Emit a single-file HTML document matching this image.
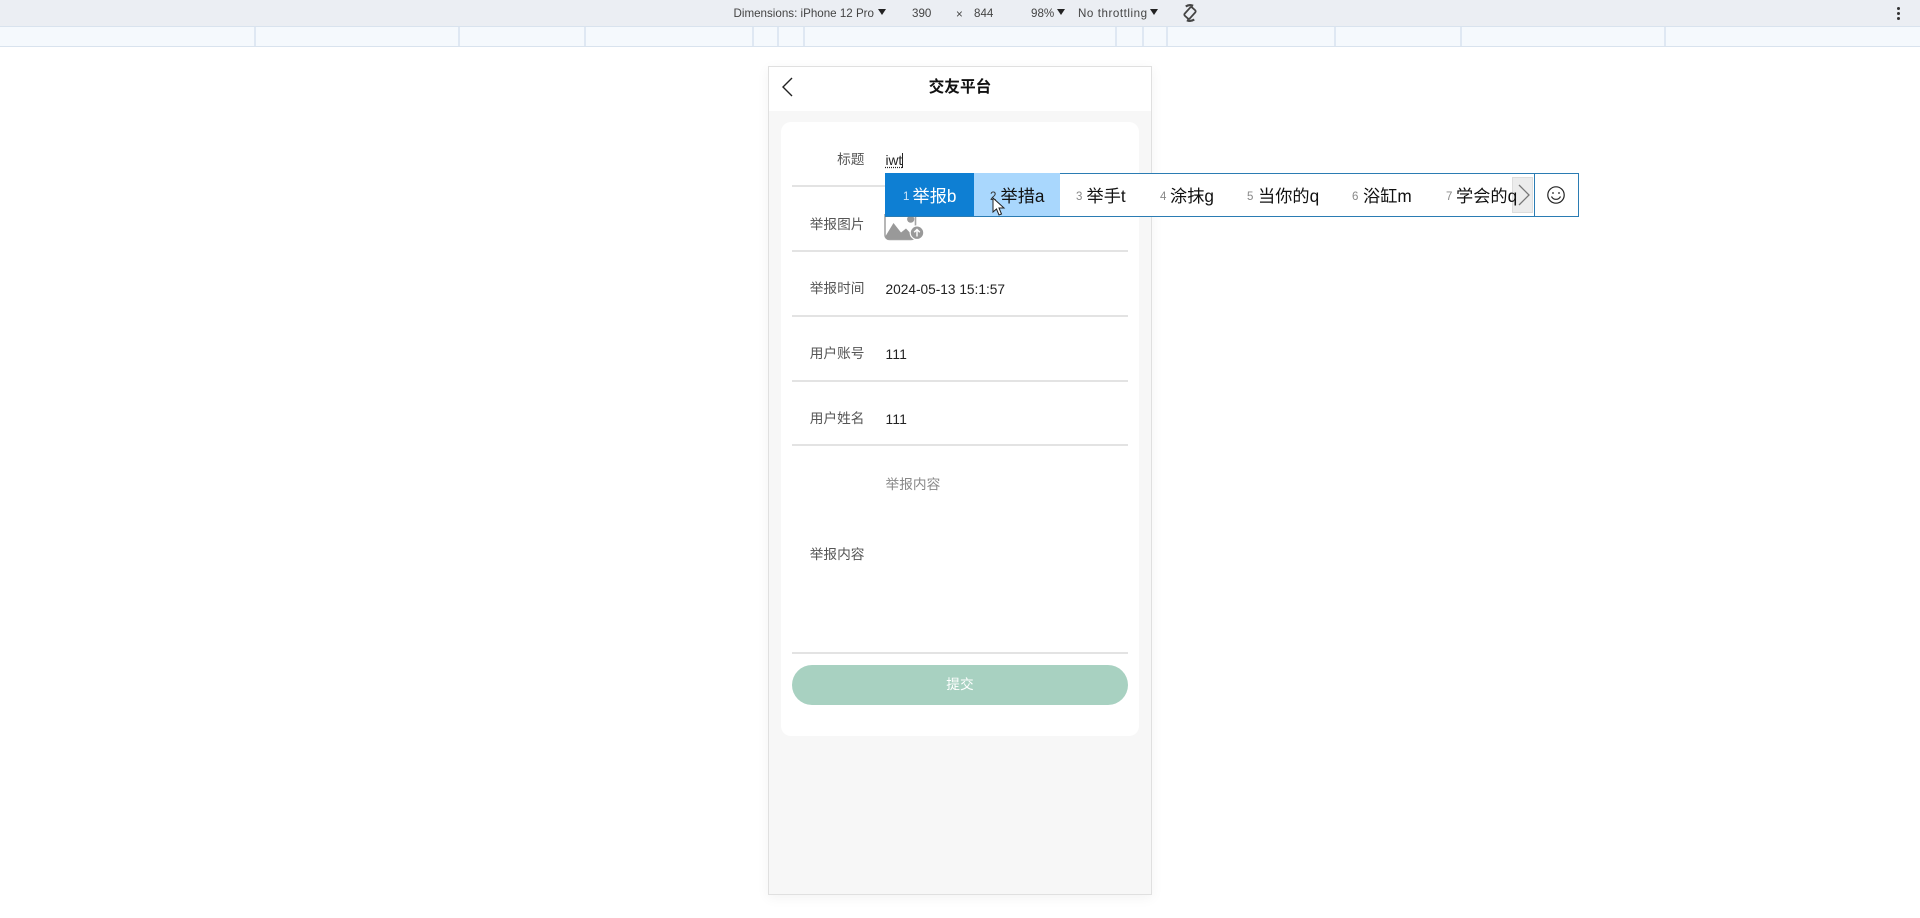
<!DOCTYPE html>
<html lang="zh-CN">
<head>
<meta charset="utf-8">
<title>交友平台</title>
<style>
html,body{margin:0;padding:0;width:1920px;height:918px;overflow:hidden;background:#fff;font-family:"Liberation Sans","Noto Sans CJK SC",sans-serif;}
.a{position:absolute;white-space:nowrap;}
.bar{left:0;top:0;width:1920px;height:26px;background:#ebeef3;}
.rul{left:0;top:26px;width:1920px;background:#f5f9fd;border-top:1px solid #d9e3ee;border-bottom:1px solid #d9e3ee;height:19px;}
.d{top:27px;width:2px;height:19px;background:#dfe8f3;}
.tb{top:6px;height:16px;line-height:16px;font-size:11.6px;color:#444;}
.tri{top:9px;width:0;height:0;border-left:4px solid transparent;border-right:4px solid transparent;border-top:6px solid #222;}
.phone{left:768px;top:66px;width:382px;height:827px;background:#f7f7f7;border:1px solid #e0e0e0;box-shadow:0 3px 12px rgba(0,0,0,.05);}
.head{left:769px;top:67px;width:382px;height:44px;background:#fff;}
.card{left:780.5px;top:122px;width:358.5px;height:614px;background:#fff;border-radius:10px;}
.line{left:792px;width:336px;height:2px;background:#e3e3e3;}
.lb{left:764px;width:100.5px;text-align:right;font-size:13.7px;height:20px;line-height:20px;color:#555;}
.v{left:885.5px;font-size:13.7px;height:20px;line-height:20px;color:#222;}
.ime{left:885px;top:173px;width:692px;height:42px;background:#fff;border:1px solid #2b7cb3;}
.c{top:175px;height:43px;line-height:43px;font-size:17.2px;color:#111;}
.n{top:176px;height:43px;line-height:43px;font-size:11.5px;color:#888;}
</style>
</head>
<body>
<div class="a bar"></div>
<div class="a rul"></div>
<div class="a d" style="left:254px"></div>
<div class="a d" style="left:458px"></div>
<div class="a d" style="left:584px"></div>
<div class="a d" style="left:752px"></div>
<div class="a d" style="left:777px"></div>
<div class="a d" style="left:803px"></div>
<div class="a d" style="left:1115px"></div>
<div class="a d" style="left:1142px"></div>
<div class="a d" style="left:1166px"></div>
<div class="a d" style="left:1334px"></div>
<div class="a d" style="left:1460px"></div>
<div class="a d" style="left:1664px"></div>

<div class="a tb" style="left:733.5px">Dimensions: iPhone 12 Pro</div>
<div class="a tri" style="left:878px"></div>
<div class="a tb" style="left:912px">390</div>
<div class="a tb" style="left:956px;top:7px">×</div>
<div class="a tb" style="left:974px">844</div>
<div class="a tb" style="left:1031px">98%</div>
<div class="a tri" style="left:1057px"></div>
<div class="a tb" style="left:1078px;letter-spacing:.55px">No throttling</div>
<div class="a tri" style="left:1150px"></div>
<svg class="a" style="left:1180px;top:3px" width="20" height="20" viewBox="0 0 20 20" fill="none" stroke="#444" stroke-width="1.8">
<g transform="rotate(42 10 10)"><rect x="6.5" y="4.5" width="7" height="11" rx="1.5"/><path d="M2.5 8A7.8 7.8 0 0 1 7.5 2.5M17.5 12A7.8 7.8 0 0 1 12.5 17.5" stroke-width="2.2"/></g>
</svg>
<div class="a" style="left:1897px;top:7px;width:3px;height:3px;background:#333;border-radius:50%"></div>
<div class="a" style="left:1897px;top:12px;width:3px;height:3px;background:#333;border-radius:50%"></div>
<div class="a" style="left:1897px;top:17px;width:3px;height:3px;background:#333;border-radius:50%"></div>

<div class="a phone"></div>
<div class="a head"></div>
<svg class="a" style="left:780px;top:76px" width="16" height="22" viewBox="0 0 16 22" fill="none" stroke="#222" stroke-width="1.4"><path d="M12 2L3 11L12 20"/></svg>
<div class="a" style="left:860px;width:200px;top:77px;height:22px;line-height:22px;text-align:center;font-size:15.7px;font-weight:700;color:#111">交友平台</div>

<div class="a card"></div>
<div class="a line" style="top:185px"></div>
<div class="a line" style="top:250px"></div>
<div class="a line" style="top:315px"></div>
<div class="a line" style="top:380px"></div>
<div class="a line" style="top:444px"></div>
<div class="a line" style="top:652px"></div>

<div class="a lb" style="top:150px">标题</div>
<div class="a lb" style="top:215px">举报图片</div>
<div class="a lb" style="top:279px">举报时间</div>
<div class="a lb" style="top:344px">用户账号</div>
<div class="a lb" style="top:409px">用户姓名</div>
<div class="a lb" style="top:545px">举报内容</div>

<div class="a v" style="top:150.5px;text-decoration:underline dotted;text-underline-offset:2px">iwt</div>
<div class="a" style="left:902px;top:153px;width:1px;height:15px;background:#222"></div>
<div class="a v" style="top:279.5px">2024-05-13 15:1:57</div>
<div class="a v" style="top:344.5px;letter-spacing:.25px">111</div>
<div class="a v" style="top:409.5px;letter-spacing:.25px">111</div>
<div class="a v" style="top:475px;color:#888">举报内容</div>

<svg class="a" style="left:880px;top:210px" width="50" height="35" viewBox="0 0 50 35">
<path d="M5 4V25a4.5 4.5 0 0 0 4.5 4.5H31a4.5 4.5 0 0 0 4.5-4.5V4" fill="none" stroke="#a5a5a5" stroke-width="1.6"/>
<circle cx="30.7" cy="9.2" r="3.6" fill="#999"/>
<path d="M5 27L13.5 13L21 22.5L26 18.5L35 28V29.5H7z" fill="#999"/>
<circle cx="37" cy="22.7" r="6.8" fill="#999" stroke="#fff" stroke-width="1.2"/>
<path d="M37 26.5V20M34.2 22.3L37 19.5L39.8 22.3" fill="none" stroke="#fff" stroke-width="1.4"/>
</svg>

<div class="a" style="left:792px;top:665px;width:336px;height:40px;background:#a8d1c1;border-radius:20px"></div>
<div class="a" style="left:792px;top:675px;width:336px;height:20px;line-height:20px;text-align:center;font-size:13.7px;color:#fff">提交</div>

<!-- IME -->
<div class="a ime"></div>
<div class="a" style="left:885px;top:173px;width:89px;height:43px;background:#0e7fd3"></div>
<div class="a" style="left:974px;top:173px;width:86px;height:43px;background:#a9d7fd"></div>
<div class="a" style="left:1512px;top:177px;width:21px;height:36px;background:#ececec;border:1px solid #ddd;box-sizing:border-box"></div>
<div class="a" style="left:1534px;top:173px;width:1px;height:43px;background:#2b7cb3"></div>

<div class="a n" style="left:903px;color:#cfe6f8">1</div>
<div class="a c" style="left:912.5px;color:#fff">举报b</div>
<div class="a n" style="left:990px;color:#333">2</div>
<div class="a c" style="left:1000.5px">举措a</div>
<div class="a n" style="left:1076px">3</div>
<div class="a c" style="left:1086.5px">举手t</div>
<div class="a n" style="left:1160px">4</div>
<div class="a c" style="left:1170px">涂抹g</div>
<div class="a n" style="left:1247px">5</div>
<div class="a c" style="left:1258px">当你的q</div>
<div class="a n" style="left:1352px">6</div>
<div class="a c" style="left:1363px">浴缸m</div>
<div class="a n" style="left:1446px">7</div>
<div class="a c" style="left:1456px">学会的q</div>

<svg class="a" style="left:1511px;top:176px" width="22" height="36" viewBox="0 0 22 36" fill="none" stroke="#777" stroke-width="1.3"><path d="M8 9L18 19L8 29"/></svg>
<svg class="a" style="left:1546px;top:185px" width="20" height="20" viewBox="0 0 20 20" fill="none" stroke="#222" stroke-width="1.2"><circle cx="10" cy="10" r="8.2"/><circle cx="7" cy="8" r=".9" fill="#222" stroke="none"/><circle cx="13" cy="8" r=".9" fill="#222" stroke="none"/><path d="M5.5 11.5a5 5 0 0 0 9 0"/></svg>

<svg class="a" style="left:992px;top:197px" width="14" height="20" viewBox="0 0 14 20"><path d="M1 1V15L4.5 12L7 18L9.5 17L7 11H12z" fill="#fff" stroke="#222" stroke-width="1"/></svg>
</body>
</html>
